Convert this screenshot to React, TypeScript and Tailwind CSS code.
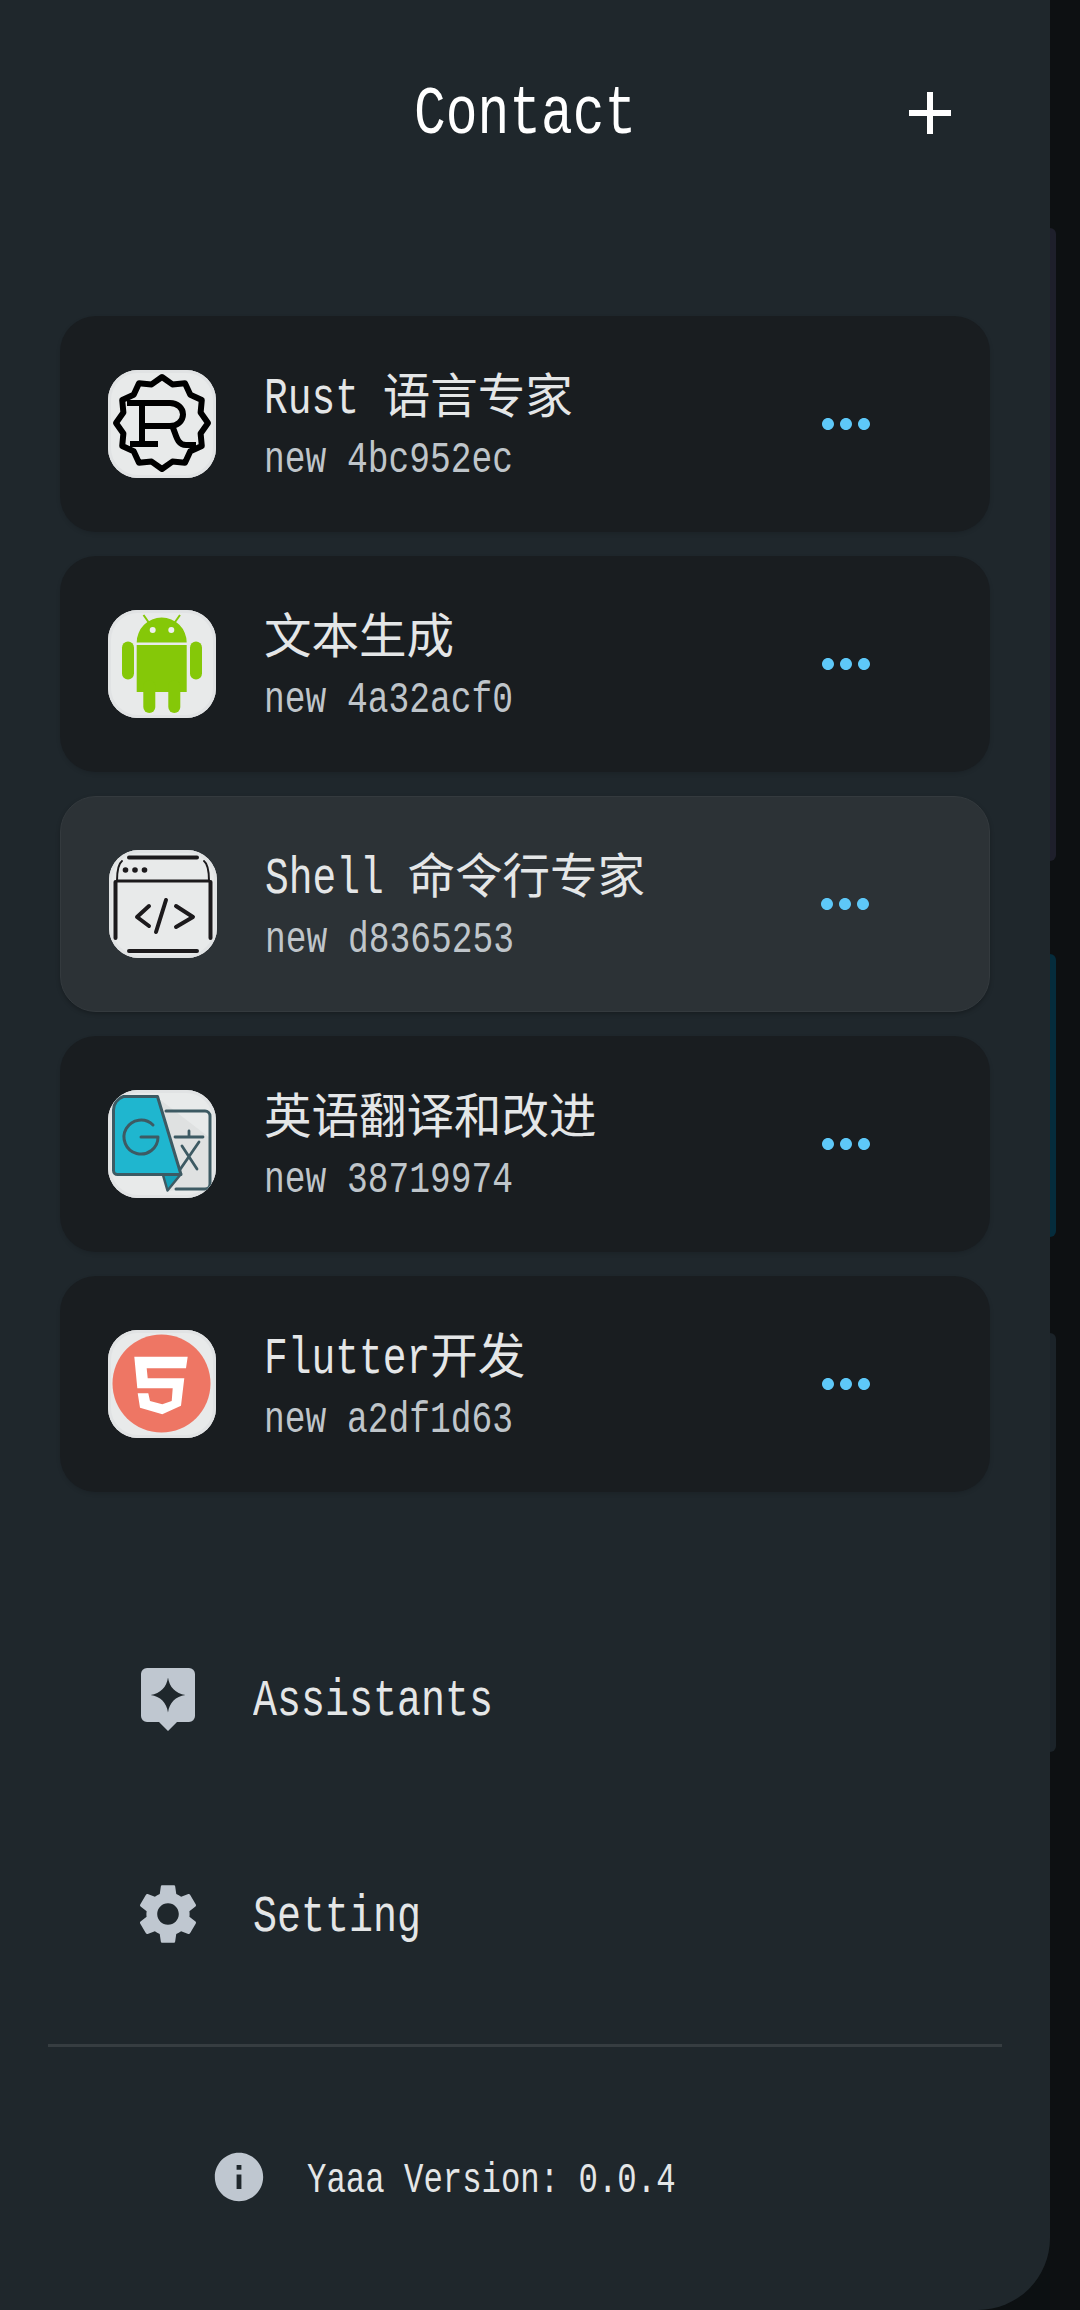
import type { ReactNode } from 'react';

const latinFont = "font-['Liberation_Mono','Noto_Sans_CJK_SC',monospace]";

// the reference font is a narrow half-width mono: latin advances 0.5em, CJK 1em
function MonoText({ text }: { text: string }) {
  const runs = text.match(/[\x00-\x7f]+|[^\x00-\x7f]+/g) ?? [];
  return (
    <>
      {runs.map((run, i) =>
        /^[\x00-\x7f]/.test(run) ? (
          <span key={i} className="inline-block whitespace-pre" style={{ width: `${run.length * 0.5}em` }}>
            <span className="inline-block origin-left scale-x-[0.7716] whitespace-pre text-[1.08em]">{run}</span>
          </span>
        ) : (
          <span key={i} className="font-['Noto_Sans_CJK_SC',sans-serif]">
            {run}
          </span>
        ),
      )}
    </>
  );
}

function Icon({ d, className }: { d: string; className: string }) {
  return (
    <svg viewBox="0 0 24 24" fill="currentColor" fillRule="evenodd" className={className}>
      <path d={d} />
    </svg>
  );
}

const starPoints = Array.from({ length: 24 }, (_, i) => {
  const r = i % 2 === 0 ? 46 : 40;
  const a = (i * Math.PI) / 12 - Math.PI / 2;
  return `${(54 + r * Math.cos(a)).toFixed(1)},${(53 + r * Math.sin(a)).toFixed(1)}`;
}).join(' ');

function RustLogo() {
  return (
    <svg viewBox="0 0 108 108" className="size-full" fill="none" stroke="#000" strokeWidth="6" strokeLinejoin="round">
      <polygon points={starPoints} />
      <path d="M19 33H62a13 11.500 0 0 1 0 23H34M34 33V74M22 74H50M64 56C68 62 68 75 78 75H88" />
    </svg>
  );
}

function AndroidLogo() {
  return (
    <svg viewBox="0 0 108 108" className="size-full" fill="#85c808">
      <path d="M28.700 32.500a25 25 0 0 1 50 0z" />
      <rect x="28.700" y="35" width="50" height="47" />
      <rect x="35.300" y="70" width="12" height="33" rx="6" />
      <rect x="60.300" y="70" width="12" height="33" rx="6" />
      <rect x="14" y="31.500" width="12" height="38" rx="6" />
      <rect x="82" y="31.500" width="12" height="38" rx="6" />
      <path d="M35.500 5l6 8.500M72 5l-6 8.500" stroke="#85c808" strokeWidth="2" />
      <circle cx="44.700" cy="20" r="3" fill="#eef0ee" />
      <circle cx="63.300" cy="20" r="3" fill="#eef0ee" />
    </svg>
  );
}

function ShellLogo() {
  return (
    <svg viewBox="0 0 108 108" className="size-full" fill="none" stroke="#1c1a1c" strokeLinecap="round" strokeLinejoin="round">
      <path d="M20 7.500H88M20 101H88M6.500 32V88M101.500 32V88" strokeWidth="4" />
      <path d="M8 31H100" strokeWidth="3" />
      <path d="M8 31C8 20 9 14 13 11M100 31C100 20 99 14 95 11" strokeWidth="2" />
      <circle cx="16.500" cy="20" r="2.800" fill="#1c1a1c" stroke="none" />
      <circle cx="26" cy="20" r="2.800" fill="#1c1a1c" stroke="none" />
      <circle cx="35.500" cy="20" r="2.800" fill="#1c1a1c" stroke="none" />
      <path d="M40 56L28 67L40 76M57 50L47 82M67 56L84 67L67 77" strokeWidth="4" />
    </svg>
  );
}

function TranslateLogo() {
  return (
    <svg viewBox="0 0 108 108" className="size-full" fill="none" strokeLinejoin="round" strokeLinecap="round">
      <polygon points="50,8 102,48 102,99 60,101 40,50" fill="#dfe1e1" />
      <path d="M58 21H97a5 5 0 0 1 5 5V94a5 5 0 0 1-5 5H68" stroke="#3d5a63" strokeWidth="3" />
      <path d="M67 47H95M81 41V47M91 52L71 81M74 56L89 79" stroke="#3d5a63" strokeWidth="2.800" />
      <path d="M54.700 84L59.500 100.500L73 84z" fill="#15a0b8" stroke="#3d5a63" strokeWidth="2.500" />
      <path d="M15.500 6.500H49.500L73 84.500H9.500a4 4 0 0 1-4-4V20a14 14 0 0 1 10-13.500z" fill="#1fb6cf" stroke="#3d5a63" strokeWidth="3" />
      <path d="M33 47H50a17 17 0 1 1-5-12" stroke="#3d5a63" strokeWidth="3" />
    </svg>
  );
}

function Html5Logo() {
  return (
    <svg viewBox="0 0 108 108" className="size-full">
      <circle cx="53.500" cy="53.500" r="49" fill="#ee7664" />
      <polygon
        fill="#fff"
        points="26.300,26.700 79.700,26.700 78,38.300 38.700,38.300 39.700,48.300 76.300,48.300 73,75.700 54.300,84.300 32,77.700 29.700,63.300 40.300,63.300 42,71 54.300,74.300 63.700,71 64.700,58.300 29.300,58.300"
      />
    </svg>
  );
}

const contacts: { title: string; sub: string; logo: ReactNode; selected?: boolean }[] = [
  { title: 'Rust 语言专家', sub: 'new 4bc952ec', logo: <RustLogo /> },
  { title: '文本生成', sub: 'new 4a32acf0', logo: <AndroidLogo /> },
  { title: 'Shell 命令行专家', sub: 'new d8365253', logo: <ShellLogo />, selected: true },
  { title: '英语翻译和改进', sub: 'new 38719974', logo: <TranslateLogo /> },
  { title: 'Flutter开发', sub: 'new a2df1d63', logo: <Html5Logo /> },
];

function ContactCard({ title, sub, logo, selected }: (typeof contacts)[number]) {
  return (
    <div
      className={
        selected
          ? 'flex h-[216px] items-center rounded-[36px] border border-[#343a3e] bg-[#2c3236] pl-12 pr-[108px] shadow-[0_2px_4px_rgba(0,0,0,0.25)]'
          : 'flex h-[216px] items-center rounded-[36px] bg-[#191d20] pl-12 pr-[108px] shadow-[0_2px_4px_rgba(0,0,0,0.12)]'
      }
    >
      <div className="size-[108px] shrink-0 overflow-hidden rounded-[30px] bg-[#e8eaea] shadow-[inset_0_0_0_3px_#e1e3e4]">{logo}</div>
      <div className="ml-12 min-w-0 flex-1 pt-[5px]">
        <div className={`-mt-1 h-[62px] whitespace-nowrap text-[47.500px] leading-[62px] text-[#e4e6e7] ${latinFont}`}>
          <MonoText text={title} />
        </div>
        <div className={`mt-[8px] h-[56px] whitespace-nowrap text-[41.500px] leading-[56px] text-[#bfc5ca] ${latinFont}`}>
          <MonoText text={sub} />
        </div>
      </div>
      <Icon
        className="size-[72px] shrink-0 text-[#5ec8f8]"
        d="M6 10c-1.100 0-2 .9-2 2s.9 2 2 2 2-.9 2-2-.9-2-2-2zm12 0c-1.100 0-2 .9-2 2s.9 2 2 2 2-.9 2-2-.9-2-2-2zm-6 0c-1.100 0-2 .9-2 2s.9 2 2 2 2-.9 2-2-.9-2-2-2z"
      />
    </div>
  );
}

function MenuRow({ icon, label }: { icon: string; label: string }) {
  return (
    <div className="flex h-[72px] items-center pl-[132px]">
      <Icon className="size-[72px] shrink-0 text-[#bfc7d0]" d={icon} />
      <div className={`ml-[49px] pt-[7px] text-[48px] leading-[72px] text-[#e4e6e7] ${latinFont}`}>
        <MonoText text={label} />
      </div>
    </div>
  );
}

export default function App() {
  return (
    <div className="flex h-[2310px] w-[1080px] overflow-hidden bg-[#0c1012]">
      {/* Drawer */}
      <div className="flex h-full w-[1050px] shrink-0 flex-col rounded-br-[72px] bg-[#1f272c]">
        <div className="flex h-[316px] pt-[77px]">
          <div className="relative flex h-[72px] w-full items-center justify-center">
            <div className={`pt-[5px] text-[63.500px] leading-[72px] text-white ${latinFont}`}>
              <MonoText text="Contact" />
            </div>
            <div className="absolute left-[894px] top-0">
              <Icon className="size-[72px] text-white" d="M19 13h-6v6h-2v-6H5v-2h6V5h2v6h6v2z" />
            </div>
          </div>
        </div>

        <div className="flex flex-col gap-6 pl-[60px] pr-[60px]">
          {contacts.map((c) => (
            <ContactCard key={c.sub} {...c} />
          ))}
        </div>

        <div className="mt-[170px] flex flex-col gap-[144px]">
          <MenuRow
            label="Assistants"
            icon="M19 2H5a2 2 0 0 0-2 2v14a2 2 0 0 0 2 2h4l3 3 3-3h4a2 2 0 0 0 2-2V4a2 2 0 0 0-2-2zM12 5.200c.5 3.300 2.500 5.300 5.800 5.800-3.300.5-5.300 2.500-5.800 5.800-.5-3.300-2.500-5.300-5.800-5.800 3.300-.5 5.300-2.500 5.800-5.800z"
          />
          <MenuRow
            label="Setting"
            icon="M19.140 12.940c.04-.3.06-.61.06-.94 0-.32-.02-.64-.07-.94l2.030-1.580c.18-.14.23-.41.12-.61l-1.920-3.320c-.12-.22-.37-.29-.59-.22l-2.390.96c-.5-.38-1.030-.7-1.620-.94l-.36-2.540c-.04-.24-.24-.41-.48-.41h-3.840c-.24 0-.43.17-.47.41l-.36 2.540c-.59.24-1.130.57-1.620.94l-2.390-.96c-.22-.08-.47 0-.59.22L2.740 8.870c-.12.21-.08.47.12.61l2.030 1.580c-.05.3-.09.63-.09.94s.02.64.07.94l-2.030 1.580c-.18.14-.23.41-.12.61l1.920 3.320c.12.22.37.29.59.22l2.390-.96c.5.38 1.030.7 1.620.94l.36 2.540c.05.24.24.41.48.41h3.840c.24 0 .44-.17.47-.41l.36-2.540c.59-.24 1.130-.56 1.620-.94l2.390.96c.22.08.47 0 .59-.22l1.920-3.320c.12-.22.07-.47-.12-.61l-2.010-1.580zM12 15.600c-1.980 0-3.600-1.620-3.600-3.600s1.620-3.600 3.600-3.600 3.600 1.620 3.600 3.600-1.620 3.600-3.600 3.600z"
          />
        </div>

        <div className="mx-[48px] mt-[94px] h-[3px] bg-[#363d41]" />

        <div className="mt-[101px] flex h-[58px] items-center pl-[210px]">
          <Icon
            className="size-[58px] shrink-0 text-[#bfc7d0]"
            d="M12 2C6.480 2 2 6.480 2 12s4.480 10 10 10 10-4.480 10-10S17.520 2 12 2zm1 15h-2v-6h2v6zm0-8h-2V7h2v2z"
          />
          <div className={`ml-[39px] pt-[8px] text-[38.800px] leading-[58px] text-[#e4e6e7] ${latinFont}`}>
            <MonoText text="Yaaa Version: 0.0.4" />
          </div>
        </div>
      </div>

      {/* Page behind the drawer, only its edge shows */}
      <div className="flex w-[30px] flex-col bg-[#0d1012]">
        <div className="mt-[228px] h-[633px] w-1.5 rounded-r-[18px] bg-[#1e1f2b]" />
        <div className="mt-[93px] h-[283px] w-1.5 rounded-r-[18px] bg-[#052c3c]" />
        <div className="mt-[96px] h-[419px] w-1.5 rounded-r-[18px] bg-[#1b2329]" />
      </div>
    </div>
  );
}
